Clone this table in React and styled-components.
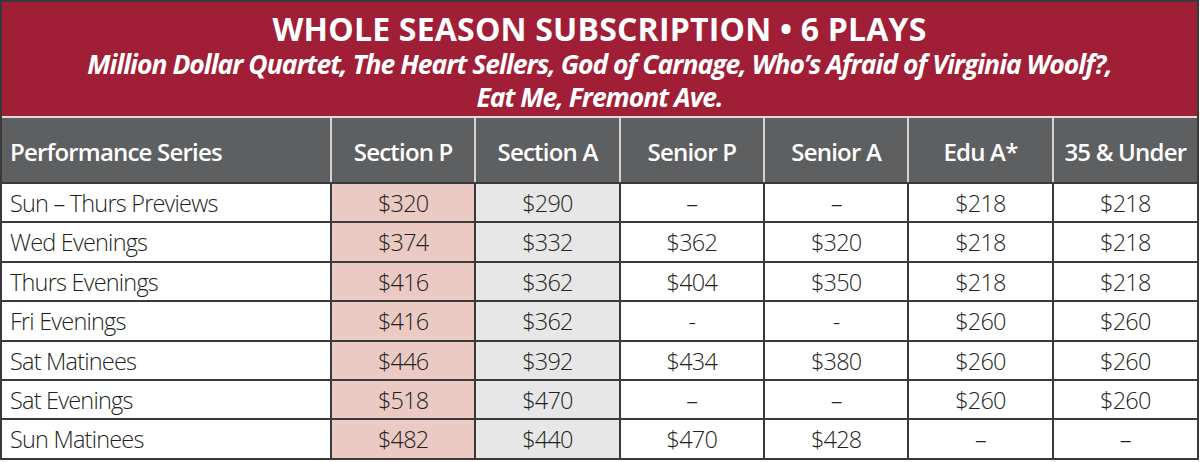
import styled, { createGlobalStyle } from "styled-components";

const GlobalStyle = createGlobalStyle`
  body {
    margin: 0;
    background: #ffffff;
  }
`;

const columns = [
  "Performance Series",
  "Section P",
  "Section A",
  "Senior P",
  "Senior A",
  "Edu A*",
  "35 & Under",
];

const rows = [
  ["Sun – Thurs Previews", "$320", "$290", "–", "–", "$218", "$218"],
  ["Wed Evenings", "$374", "$332", "$362", "$320", "$218", "$218"],
  ["Thurs Evenings", "$416", "$362", "$404", "$350", "$218", "$218"],
  ["Fri Evenings", "$416", "$362", "-", "-", "$260", "$260"],
  ["Sat Matinees", "$446", "$392", "$434", "$380", "$260", "$260"],
  ["Sat Evenings", "$518", "$470", "–", "–", "$260", "$260"],
  ["Sun Matinees", "$482", "$440", "$470", "$428", "–", "–"],
];

const App = () => {
  return (
    <>
      <GlobalStyle />
      <Frame>
        <Banner>
          <Title>WHOLE SEASON SUBSCRIPTION • 6 PLAYS</Title>
          <Plays>
            Million Dollar Quartet, The Heart Sellers, God of Carnage, Who’s
            Afraid of Virginia Woolf?,
            <br />
            Eat Me, Fremont Ave.
          </Plays>
        </Banner>
        <PriceTable>
          <colgroup>
            <col style={{ width: 329 }} />
            {columns.slice(1).map((c) => (
              <col key={c} />
            ))}
          </colgroup>
          <thead>
            <tr>
              {columns.map((c, i) => (
                <HeadCell key={c} first={i === 0}>
                  {c}
                </HeadCell>
              ))}
            </tr>
          </thead>
          <tbody>
            {rows.map((r) => (
              <tr key={r[0]}>
                {r.map((v, i) => (
                  <Cell
                    key={i}
                    first={i === 0}
                    tint={i === 1 ? "pink" : i === 2 ? "gray" : "none"}
                  >
                    {v}
                  </Cell>
                ))}
              </tr>
            ))}
          </tbody>
        </PriceTable>
      </Frame>
    </>
  );
};

const Frame = styled.div`
  width: 1199px;
  box-sizing: border-box;
  border: 2px solid #3a3a3a;
  border-bottom: none;
  background: #ffffff;
`;

const Banner = styled.div`
  height: 116px;
  box-sizing: border-box;
  background-color: #a11f36;
  border-bottom: 2px solid #e4d9db;
  color: #ffffff;
  text-align: center;
  padding-top: 8px;
`;

const Title = styled.h1`
  margin: 0;
  font-family: "Open Sans", sans-serif;
  font-weight: 700;
  font-size: 32px;
  line-height: 38px;
  letter-spacing: 0.2px;
`;

const Plays = styled.p`
  margin: 0;
  font-family: "Open Sans", sans-serif;
  font-weight: 700;
  font-style: italic;
  font-size: 26.5px;
  line-height: 33px;
  letter-spacing: -1px;
`;

const PriceTable = styled.table`
  width: 100%;
  table-layout: fixed;
  border-collapse: collapse;
`;

const HeadCell = styled.th`
  height: 61px;
  padding: 3px 0 0 ${(props) => (props.first ? "8px" : "0")};
  background-color: #5e5f61;
  color: #ffffff;
  border-left: ${(props) => (props.first ? "none" : "2px solid #d4d4d4")};
  border-bottom: 2px solid #3a3a3a;
  text-align: ${(props) => (props.first ? "left" : "center")};
  font-family: "Open Sans", sans-serif;
  font-weight: 600;
  font-size: 24px;
  letter-spacing: -0.8px;
`;

const Cell = styled.td`
  height: 35.4px;
  padding: 2px 0 0 ${(props) => (props.first ? "8px" : "0")};
  border-left: ${(props) => (props.first ? "none" : "2px solid #3a3a3a")};
  border-bottom: 2px solid #3a3a3a;
  background-color: ${(props) =>
    props.tint === "pink"
      ? "#ebcac4"
      : props.tint === "gray"
      ? "#e7e7e7"
      : "#ffffff"};
  color: #231f20;
  text-align: ${(props) => (props.first ? "left" : "center")};
  font-family: "Open Sans", sans-serif;
  font-weight: 300;
  font-size: 23.5px;
  letter-spacing: -0.8px;
  line-height: 1;
`;

export default App;
